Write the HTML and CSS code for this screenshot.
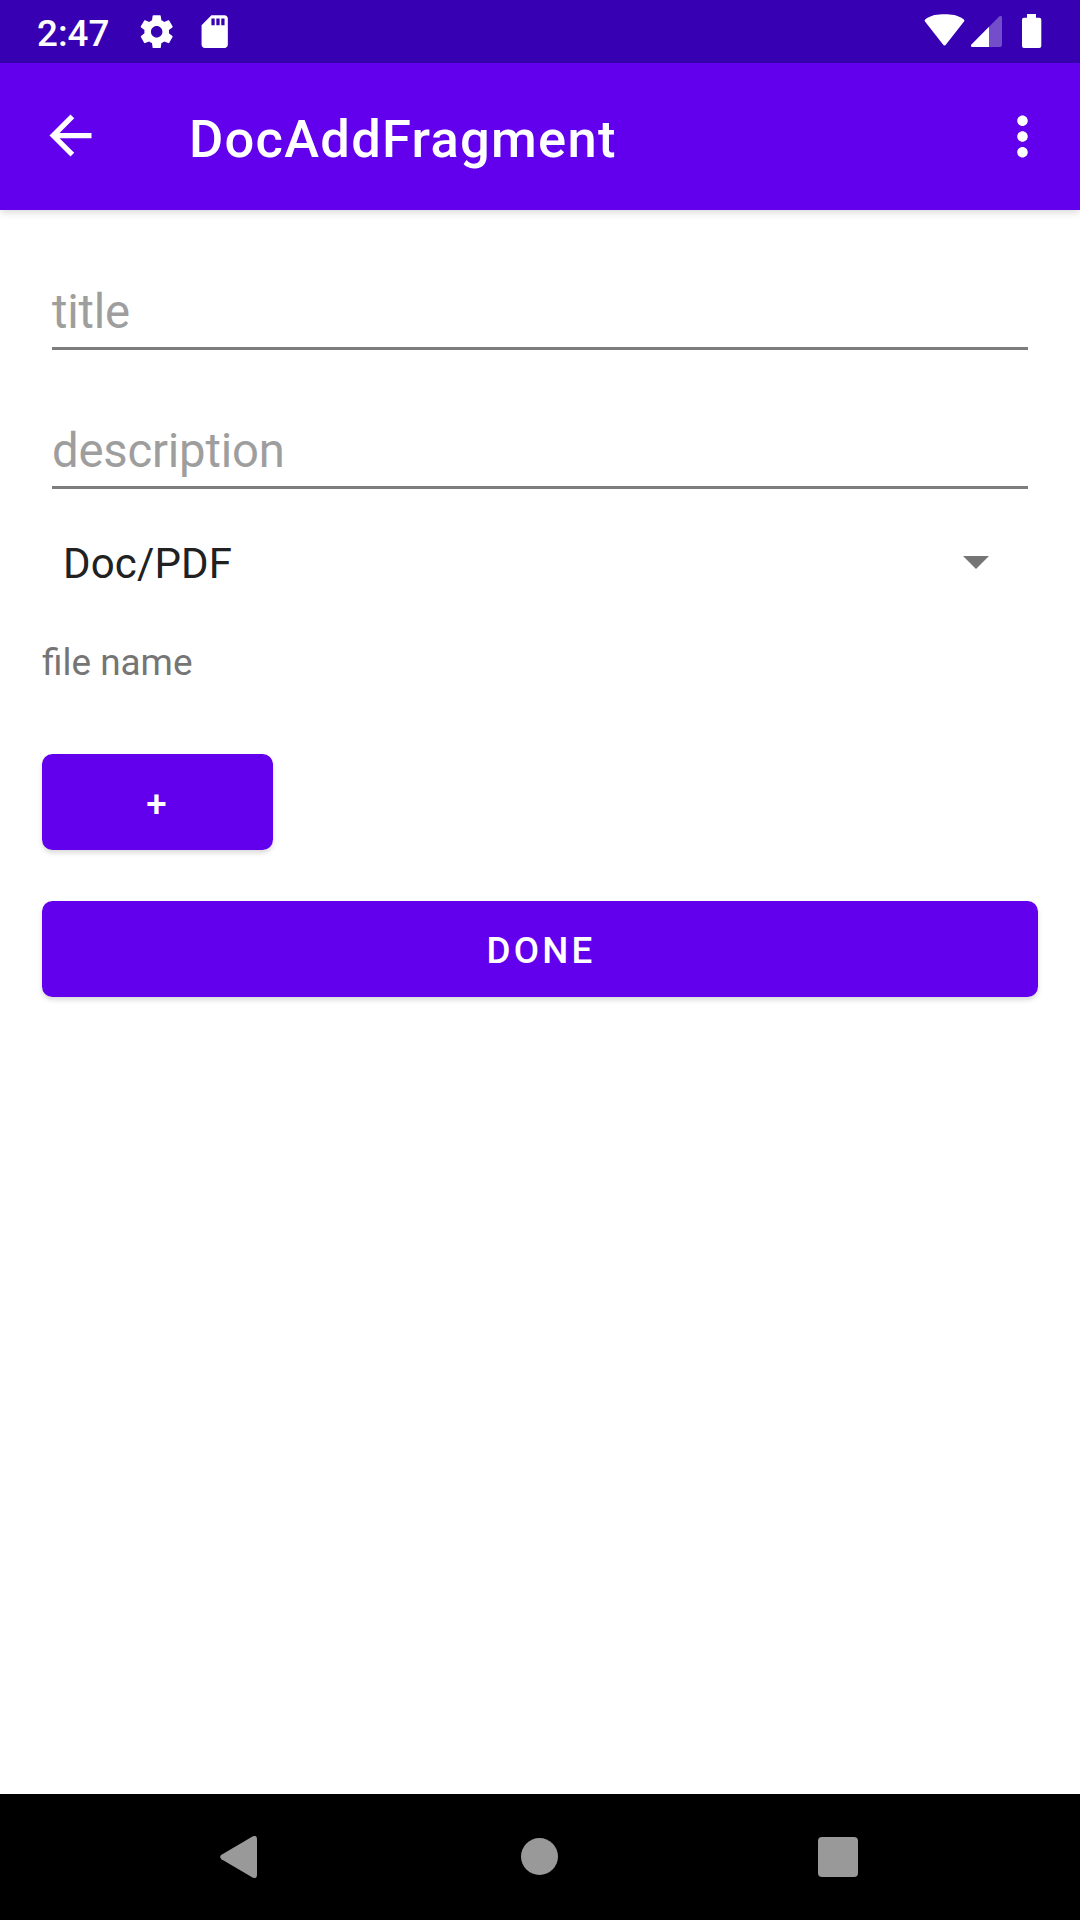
FILE: index.html
```html
<!DOCTYPE html>
<html lang="en">
<head>
<meta charset="utf-8">
<title>DocAddFragment</title>
<link rel="stylesheet" href="styles.css">
</head>
<body>
<div class="screen">
  <div class="status-bar">
    <span class="clock">2:47</span>
    <svg class="icon-gear" viewBox="0 0 24 24"><path d="M19.43 12.98c.04-.32.07-.64.07-.98s-.03-.66-.07-.98l2.11-1.65c.19-.15.24-.42.12-.64l-2-3.46c-.12-.22-.39-.3-.61-.22l-2.49 1c-.52-.4-1.08-.73-1.69-.98l-.38-2.65C14.46 2.18 14.25 2 14 2h-4c-.25 0-.46.18-.49.42l-.38 2.65c-.61.25-1.17.59-1.69.98l-2.49-1c-.23-.09-.49 0-.61.22l-2 3.46c-.13.22-.07.49.12.64l2.11 1.65c-.04.32-.07.65-.07.98s.03.66.07.98l-2.11 1.65c-.19.15-.24.42-.12.64l2 3.46c.12.22.39.3.61.22l2.49-1c.52.4 1.08.73 1.69.98l.38 2.65c.03.24.24.42.49.42h4c.25 0 .46-.18.49-.42l.38-2.65c.61-.25 1.17-.59 1.69-.98l2.49 1c.23.09.49 0 .61-.22l2-3.46c.12-.22.07-.49-.12-.64l-2.11-1.65zM12 15.5c-1.93 0-3.5-1.57-3.5-3.5s1.57-3.5 3.5-3.5 3.5 1.57 3.5 3.5-1.57 3.5-3.5 3.5z"/></svg>
    <svg class="icon-sd" viewBox="0 0 24 24"><path d="M18 2h-8L4 8v12c0 1.1.9 2 2 2h12c1.1 0 2-.9 2-2V4c0-1.1-.9-2-2-2zm-6 6h-2V4h2v4zm3 0h-2V4h2v4zm3 0h-2V4h2v4z"/></svg>
    <span class="spacer"></span>
    <svg class="icon-system" viewBox="0 0 120 36">
      <path d="M.8 9.2Q.2 8.1 1.4 7.3C7.2 2.8 13.8 2.2 20.5 2.2S33.8 2.8 39.6 7.3Q40.8 8.1 40.2 9.2L22 32.6Q20.5 34.4 19 32.6Z"/>
      <path opacity=".3" d="M65 14.7 75.2 4.6Q77.9 2.6 78 5.8V33Q78 35 76 35H65Z"/>
      <path d="M65 14.7V35H48.5Q46 34.6 47.4 32.4Z"/>
      <path d="M103 2h9v3.8h3.3q2 0 2 2v26.2q0 2-2 2h-15.3q-2 0-2-2V7.8q0-2 2-2h3z"/>
    </svg>
  </div>
  <header class="app-bar">
    <svg class="icon-bar" viewBox="0 0 24 24"><path d="M20 11H7.83l5.59-5.59L12 4l-8 8 8 8 1.41-1.41L7.83 13H20v-2z"/></svg>
    <h1 class="title">DocAddFragment</h1>
    <svg class="icon-bar" viewBox="0 0 24 24"><path d="M12 8c1.1 0 2-.9 2-2s-.9-2-2-2-2 .9-2 2 .9 2 2 2zm0 2c-1.1 0-2 .9-2 2s.9 2 2 2 2-.9 2-2-.9-2-2-2zm0 6c-1.1 0-2 .9-2 2s.9 2 2 2 2-.9 2-2-.9-2-2-2z"/></svg>
  </header>
  <main class="form">
    <div class="field">title</div>
    <div class="field">description</div>
    <div class="spinner">
      <span>Doc/PDF</span>
      <svg class="caret" viewBox="0 0 26 13"><path d="M0 0H26L13 13Z"/></svg>
    </div>
    <p class="file-name">file name</p>
    <button class="button button-add">+</button>
    <button class="button">DONE</button>
  </main>
  <nav class="nav-bar">
    <svg class="nav-back" viewBox="0 0 37 42"><path d="M32.5.4Q37-1.3 37 3.5V38.5Q37 43.3 32.5 41.6L1.5 23.2Q-1.2 21 1.5 18.8Z"/></svg>
    <span class="nav-home"></span>
    <span class="nav-recent"></span>
  </nav>
</div>
</body>
</html>
```
FILE: styles.css
```css
body {
  margin: 0;
  background: #fff;
  font-family: Roboto, sans-serif;
}

.screen {
  display: flex;
  flex-direction: column;
  width: 1080px;
  height: 1920px;
  overflow: hidden;
}

svg {
  display: block;
  flex: none;
  fill: #fff;
}

.status-bar {
  display: flex;
  align-items: center;
  box-sizing: border-box;
  height: 63px;
  padding: 0 36px 0 37px;
  background: #3700b3;
}

.clock {
  width: 100px;
  padding-top: 3px;
  color: #fff;
  font-size: 36.75px;
  font-weight: 500;
  line-height: 43px;
}

.icon-gear,
.icon-sd {
  width: 39.4px;
  height: 39.4px;
}

.icon-sd {
  margin-left: 19px;
}

.spacer {
  flex: 1;
}

.icon-system {
  width: 120px;
  height: 36px;
  margin-bottom: 3px;
}

.app-bar {
  display: flex;
  align-items: center;
  box-sizing: border-box;
  height: 147px;
  padding: 0 26px 0 39px;
  background: #6200ee;
  box-shadow: 0 2px 8px rgba(0, 0, 0, 0.17);
}

.icon-bar {
  width: 63px;
  height: 63px;
}

.icon-bar:first-child {
  margin-bottom: 2px;
}

.title {
  flex: 1;
  margin: 0;
  padding: 4px 0 0 87px;
  color: #fff;
  font-size: 52.5px;
  font-weight: 500;
  line-height: 62px;
  letter-spacing: 1.27px;
}

.form {
  display: flex;
  flex: 1;
  flex-direction: column;
  padding: 66px 42px 0;
}

.field {
  margin: 0 10px 65px;
  padding-top: 2px;
  border-bottom: 3px solid #7d7d7d;
  color: #9e9e9e;
  font-size: 47.25px;
  line-height: 69px;
  letter-spacing: -0.2px;
}

.field + .field {
  margin-bottom: 42px;
}

.spinner {
  display: flex;
  align-items: center;
  justify-content: space-between;
  padding: 0 49px 0 21px;
  color: #212121;
  font-size: 42px;
  line-height: 65px;
  letter-spacing: 0.15px;
}

.caret {
  width: 26px;
  height: 13px;
  margin-bottom: 2px;
  fill: #757575;
}

.file-name {
  margin: 44px 0 69px;
  color: #757575;
  font-size: 36.9px;
  line-height: 45px;
}

.button {
  height: 96px;
  margin: 0;
  padding: 2px 0 0 2px;
  border: 0;
  border-radius: 10.5px;
  background: #6200ee;
  box-shadow: 0 3px 5px rgba(0, 0, 0, 0.15);
  color: #fff;
  font-family: inherit;
  font-size: 36.75px;
  font-weight: 500;
  letter-spacing: 0.088em;
}

.button-add {
  width: 231px;
  margin-bottom: 51px;
  padding: 4px 0 0 1px;
}

.nav-bar {
  display: flex;
  align-items: center;
  justify-content: space-between;
  box-sizing: border-box;
  height: 126px;
  padding: 0 222px 0 220px;
  background: #000;
}

.nav-back {
  width: 37px;
  height: 42px;
  fill: #999;
}

.nav-home {
  width: 37px;
  height: 37px;
  margin: 0 0 2px 3px;
  border-radius: 50%;
  background: #999;
}

.nav-recent {
  width: 40px;
  height: 40px;
  border-radius: 4px;
  background: #999;
}
```
